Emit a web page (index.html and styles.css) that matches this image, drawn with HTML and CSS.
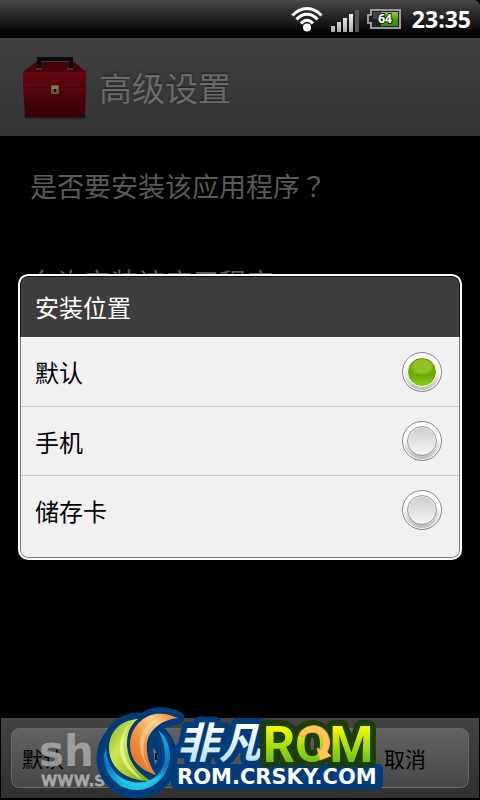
FILE: index.html
```
<!DOCTYPE html>
<html lang="zh-CN">
<head>
    <meta charset="UTF-8">
    <meta name="viewport" content="width=device-width, initial-scale=1.0">
    <title>高级设置</title>
    <link rel="stylesheet" href="styles.css">
</head>
<body>
    <div class="status-bar">
        <svg class="wifi" width="32" height="26" viewBox="0 0 32 26" fill="none" stroke="#fff" stroke-width="3">
            <path d="M1.500 9.500C9.500 0 22.500 0 30.500 9.500"/>
            <path d="M5.500 13.500C11.500 6.500 20.500 6.500 26.500 13.500"/>
            <path d="M10 17.500C13.500 13 18.500 13 22 17.500"/>
            <circle cx="16" cy="21.500" r="4" fill="#fff" stroke="none"/>
        </svg>
        <svg class="signal" width="28" height="22" viewBox="0 0 28 22">
            <defs>
                <linearGradient id="bar" x1="0" y1="0" x2="0" y2="22" gradientUnits="userSpaceOnUse">
                    <stop offset="0" stop-color="#fff"/>
                    <stop offset="1" stop-color="#aaa"/>
                </linearGradient>
            </defs>
            <g fill="url(#bar)">
                <rect x="0" y="16" width="4" height="6"/>
                <rect x="6" y="12" width="4" height="10"/>
                <rect x="12" y="8" width="4" height="14"/>
                <rect x="18" y="4" width="4" height="18"/>
            </g>
            <rect x="24" y="0" width="4" height="22" fill="#555"/>
        </svg>
        <svg class="battery" width="34" height="20" viewBox="0 0 34 20">
            <defs>
                <linearGradient id="charge" x1="0" y1="0" x2="0" y2="1">
                    <stop offset="0" stop-color="#8fc63c"/>
                    <stop offset=".5" stop-color="#4ba000"/>
                    <stop offset="1" stop-color="#3b8a00"/>
                </linearGradient>
            </defs>
            <path d="M4 1H33V19H4V14H1V6H4Z" fill="#222" stroke="#999" stroke-width="2"/>
            <rect x="6" y="3" width="25" height="7" fill="#444"/>
            <rect x="14" y="3" width="17" height="14" fill="url(#charge)"/>
            <text x="18" y="14" class="battery-level">64</text>
        </svg>
        <span class="clock">23:35</span>
    </div>

    <header class="title-bar">
        <svg width="66" height="66" viewBox="0 0 66 66">
            <defs>
                <linearGradient id="box" x1="0" y1="0" x2="0" y2="1">
                    <stop offset="0" stop-color="#680711"/>
                    <stop offset="1" stop-color="#350004"/>
                </linearGradient>
            </defs>
            <path d="M2 62H64L62 65H4Z" fill="#222"/>
            <path d="M14 8H52L64 18V21H1V18Z" fill="#450207"/>
            <path d="M1 18H64V33L63 63H3L1 33Z" fill="url(#box)"/>
            <path d="M1 34H64" stroke="#2e0508"/>
            <path d="M1 35H64" stroke="#7c1a20" stroke-opacity=".5"/>
            <path d="M17 15V5H49V15" fill="none" stroke="#090c0d" stroke-width="4"/>
            <path d="M14 15H20M45 15H51" stroke="#6a5a40" stroke-width="1"/>
            <rect x="29" y="31" width="8" height="9" fill="#5e553e"/>
            <rect x="30" y="32" width="6" height="3" fill="#84775c"/>
            <path d="M33 35V38" stroke="#111" stroke-width="2"/>
        </svg>
        <h1>高级设置</h1>
    </header>

    <main class="content">
        <p>是否要安装该应用程序<span class="mark" lang="zh-TW">？</span></p>
        <p>允许安装该应用程序</p>
    </main>

    <footer class="action-bar">
        <div class="actions">
            <button type="button" class="action-default">默认</button>
            <button type="button" class="action-cancel">取消</button>
        </div>
    </footer>

    <div class="overlay">
        <form class="dialog" role="dialog" aria-labelledby="dialog-title">
            <h2 id="dialog-title">安装位置</h2>
            <div class="options">
                <label class="option">默认 <input type="radio" name="location" checked></label>
                <label class="option">手机 <input type="radio" name="location"></label>
                <label class="option">储存卡 <input type="radio" name="location"></label>
            </div>
        </form>
    </div>

    <svg class="watermark" width="390" height="100" viewBox="0 0 390 100">
        <defs>
            <linearGradient id="green" x1="0" y1="0" x2="1" y2="1">
                <stop offset="0" stop-color="#79ac12"/>
                <stop offset=".35" stop-color="#d0e65c"/>
                <stop offset=".6" stop-color="#b0d02c"/>
                <stop offset="1" stop-color="#76a817"/>
            </linearGradient>
            <linearGradient id="orange" x1="1" y1="0" x2="0" y2="1">
                <stop offset="0" stop-color="#e87814"/>
                <stop offset=".3" stop-color="#ffce8c"/>
                <stop offset=".6" stop-color="#ef9442"/>
                <stop offset="1" stop-color="#e4601b"/>
            </linearGradient>
            <linearGradient id="ring" x1="0" y1="0" x2="0" y2="1">
                <stop offset="0" stop-color="#16b4ea"/>
                <stop offset=".6" stop-color="#0779bd"/>
                <stop offset="1" stop-color="#20cce8"/>
            </linearGradient>
            <linearGradient id="ice" x1="0" y1="0" x2="0" y2="1">
                <stop offset=".3" stop-color="#fff"/>
                <stop offset="1" stop-color="#abdcf8"/>
            </linearGradient>
            <linearGradient id="lime" x1="0" y1="0" x2="0" y2="1">
                <stop offset=".2" stop-color="#f0fa00"/>
                <stop offset=".8" stop-color="#6fbf16"/>
            </linearGradient>
        </defs>
        <g class="shadow-text">
            <text x="39" y="66" class="site-name">sh</text>
            <text x="41" y="86" class="site-url">www.s</text>
        </g>
        <!-- emblem outline -->
        <g fill="#003c7a" stroke="#003c7a" stroke-width="13" stroke-linejoin="round">
            <circle cx="137" cy="58" r="34"/>
            <path d="M138 19C120 20 109 32 109 48C109 67 124 81 151 81Z"/>
            <path d="M178 18C170 14 162 13 155 14C140 17 130 30 130 45C130 60 140 70 156 75C148 64 146 52 147 42C150 29 161 20 178 18Z"/>
        </g>
        <path d="M158 30C166 36 170 46 170 57C169 76 154 90 137 90C119 90 104 75 104 56L106 47C106 67 119 81 137 83C152 83 165 72 165 56C165 47 163 39 158 30Z" fill="url(#ring)"/>
        <path d="M112 71C124 85 147 87 163 73C151 91 126 92 112 71Z" fill="#25c8e9"/>
        <path d="M138 19C120 20 109 32 109 48C109 67 124 81 151 81C135 71 128 60 127 45C127 33 130 25 138 19Z" fill="url(#green)"/>
        <path d="M129 24C114 43 117 67 143 80C124 64 118 46 129 24Z" fill="#eff8a5" opacity=".7"/>
        <path d="M178 18C170 14 162 13 155 14C140 17 130 30 130 45C130 60 140 70 156 75C148 64 146 52 147 42C150 29 161 20 178 18Z" fill="url(#orange)"/>
        <path d="M163 16C141 23 130 45 152 73C139 56 140 31 163 16Z" fill="#ffe1b5" opacity=".5"/>
        <path d="M153 48Q161 55 155 65Z" fill="#777"/>
        <path d="M156 53V60" stroke="#111" stroke-width="2"/>
        <rect x="171" y="64" width="212" height="25" rx="5" fill="#003c7a"/>
        <text x="177" y="58" class="brand brand-cn">非凡</text>
        <text x="263" y="62" class="brand brand-rom">ROM</text>
        <path d="M299 35C305 23 321 23 327 33C331 40 330 47 327 52L331 56L320 60L317 48L321 50C324 44 323 38 320 35C314 30 306 33 303 37Z" fill="#fbc65b" stroke="#f3a72c"/>
        <rect x="172" y="67" width="210" height="21" rx="4" fill="#003c7a"/>
        <text x="177" y="84" class="brand-url">ROM.CRSKY.COM</text>
    </svg>
</body>
</html>
```

FILE: styles.css
```
* {
    box-sizing: border-box;
}

html {
    height: 100%;
}

body {
    font-family: "Noto Sans CJK SC", sans-serif;
    margin: 0;
    min-height: 100%;
    display: flex;
    flex-direction: column;
    position: relative;
    background-color: #000;
    overflow: hidden;
}

h1, h2, p {
    margin: 0;
    font-weight: normal;
}

.status-bar {
    height: 38px;
    padding: 0 9px;
    display: flex;
    align-items: center;
    justify-content: flex-end;
    gap: 8px;
    background: linear-gradient(#484848, #000 90%);
    border-radius: 0 6px 0 0;
}

.signal {
    margin-top: 4px;
}

.battery-level {
    font: bold 12px "Open Sans", sans-serif;
    text-anchor: middle;
    fill: #fff;
    stroke: #222;
    stroke-width: 2px;
    paint-order: stroke;
}

.clock {
    margin-left: 3px;
    font: bold 23px "Open Sans", sans-serif;
    color: #fff;
}

.title-bar {
    height: 98px;
    padding: 0 22px;
    display: flex;
    align-items: center;
    gap: 11px;
    background: linear-gradient(#404040, #333);
}

.title-bar h1 {
    font-size: 33px;
    line-height: 48px;
    color: #6a6a6a;
    text-shadow: 0 -1px 2px #222;
}

.content {
    flex: 1;
    padding: 30px;
    display: flex;
    flex-direction: column;
    gap: 56px;
}

.content p {
    font-size: 27px;
    line-height: 40px;
    color: #5a5a5a;
}

.content .mark {
    font-family: "Noto Sans CJK TC", sans-serif;
}

.action-bar {
    margin: 0 1px 2px;
    padding: 10px;
    background: linear-gradient(#444, #303030);
}

.actions {
    height: 60px;
    display: flex;
    justify-content: space-between;
    background: linear-gradient(#626262, #484848);
    border: 1px solid #686868;
    border-radius: 8px;
}

.actions button {
    padding: 0 10px;
    font: 21px "Noto Sans CJK SC", sans-serif;
    color: #000;
    background: none;
    border: 0;
}

.actions .action-cancel {
    padding: 0 42px;
}

/* dialog */
.overlay {
    position: absolute;
    inset: 34px 18px 0;
    display: flex;
    align-items: center;
}

.dialog {
    flex: 1;
    border: 2px solid #fff;
    border-radius: 10px;
    background-color: #f1f1f1;
    overflow: hidden;
}

.dialog h2 {
    padding: 0 14px;
    font-size: 24px;
    line-height: 60px;
    color: #fff;
    background-color: #3d3d3d;
    border: 1px solid #111;
    border-bottom: 0;
    border-radius: 8px 8px 0 0;
}

.options {
    padding-bottom: 13px;
    border: 1px solid #777;
    border-top: 0;
    border-radius: 0 0 8px 8px;
}

.option {
    height: 69px;
    padding: 0 17px 0 14px;
    display: flex;
    align-items: center;
    justify-content: space-between;
    font-size: 24px;
    color: #000;
}

.option + .option {
    border-top: 1px solid #ccc;
}

.option input {
    appearance: none;
    width: 40px;
    height: 40px;
    margin: 0;
    display: grid;
    place-items: center;
    border: 1px solid #888;
    border-radius: 50%;
    background: linear-gradient(#fff 40%, #b8b8b8);
    box-shadow: inset 0 0 0 1px #fff;
}

.option input::before {
    content: "";
    width: 28px;
    height: 28px;
    border: 1px solid #999;
    border-radius: 50%;
    background: linear-gradient(#ccc, #f6f6f6);
    box-shadow: inset 0 0 0 1px #eee;
}

.option input:checked::before {
    border-color: #fff;
    background: radial-gradient(ellipse 12px 9px at 50% 30%, #8fc420 70%, transparent), linear-gradient(#76b500, #6aa800 60%, #8bd013);
    box-shadow: inset 0 1px 1px #5a8d00;
}

/* logo over the action bar */
.watermark {
    position: absolute;
    left: 0;
    bottom: 0;
    pointer-events: none;
}

.shadow-text {
    fill: #aaa;
    fill-opacity: .85;
    font-family: "DejaVu Sans", sans-serif;
}

.site-name {
    font-size: 42px;
    font-weight: bold;
}

.site-url {
    font-size: 20px;
    stroke: #aaa;
    stroke-width: 1px;
}

.brand {
    font-weight: bold;
    stroke-width: 12px;
    stroke-linejoin: round;
    paint-order: stroke;
}

.brand-cn {
    font-size: 42px;
    font-style: italic;
    fill: url(#ice);
    stroke: #003c7a;
}

.brand-rom {
    font-family: Roboto, sans-serif;
    font-size: 50px;
    fill: url(#lime);
    stroke: #1d3c06;
}

.brand-url {
    font: bold 21px "DejaVu Sans", sans-serif;
    fill: #fff;
}
```
